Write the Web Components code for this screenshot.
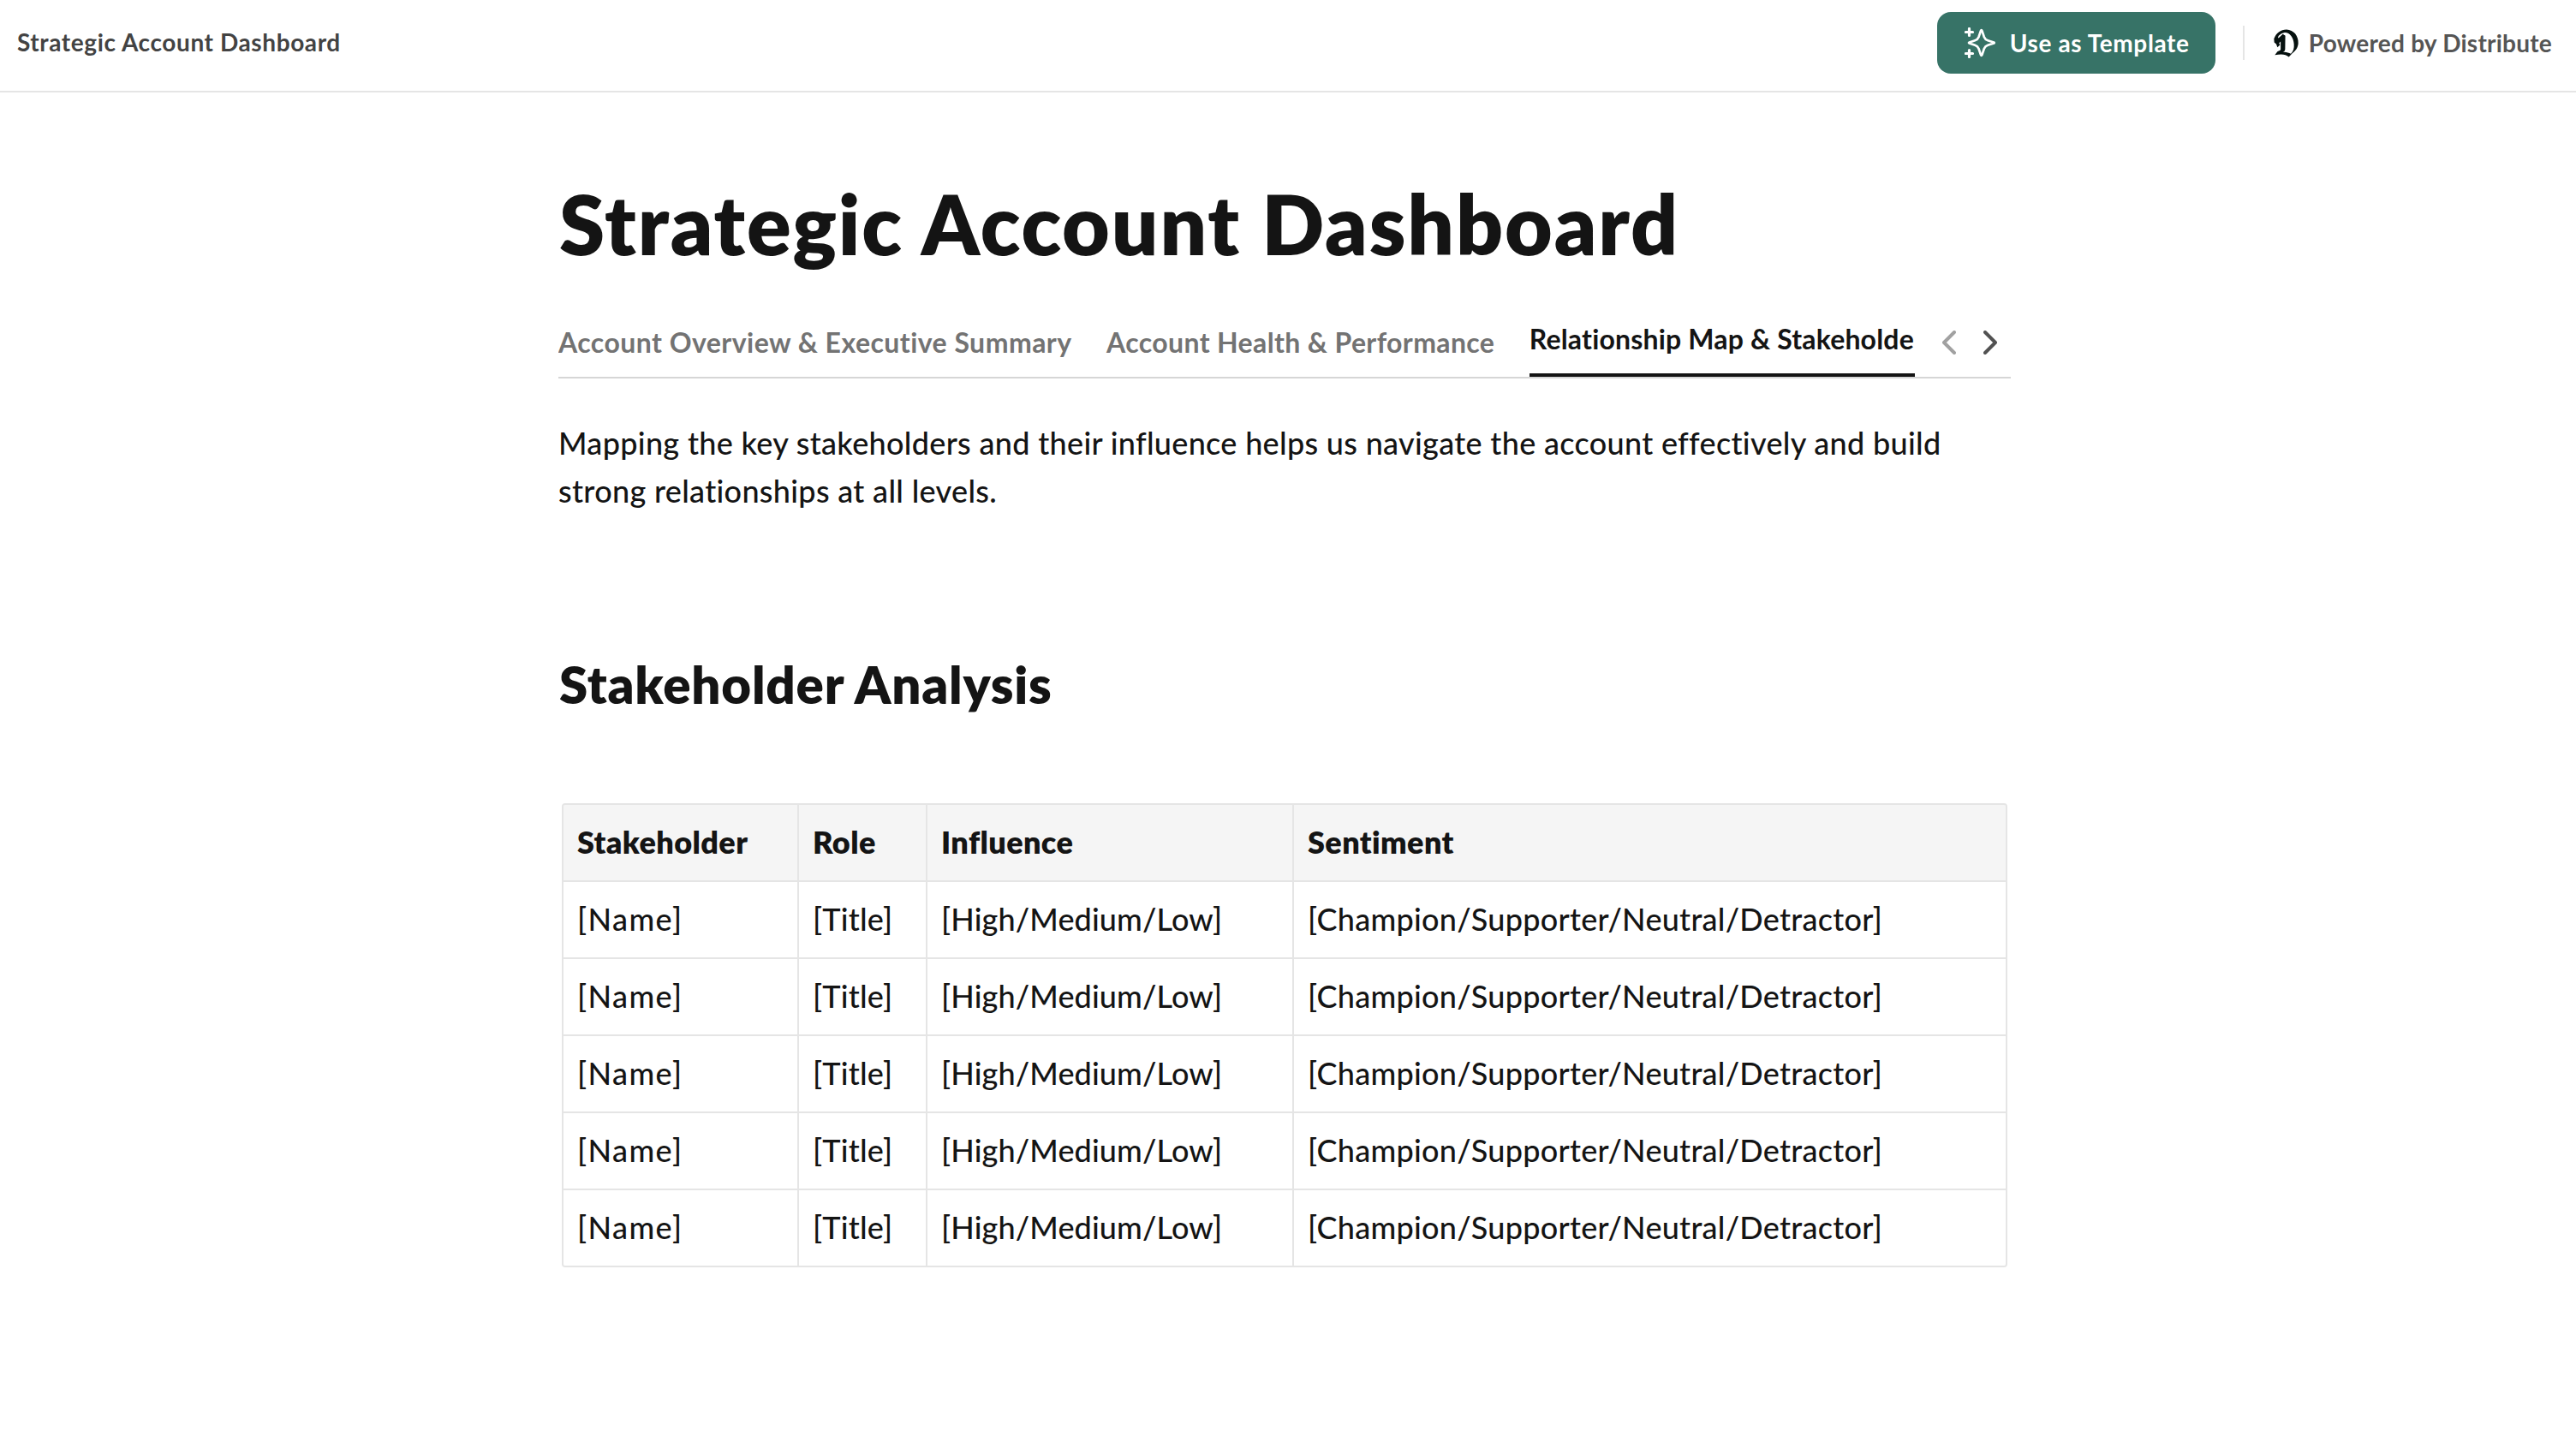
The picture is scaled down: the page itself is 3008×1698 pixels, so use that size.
<!DOCTYPE html>
<html lang="en">
<head>
<meta charset="utf-8">
<title>Strategic Account Dashboard</title>
<style>
  body {
    margin: 0;
    background: #fff;
    color: #141414;
    font-family: Lato, "Open Sans", sans-serif;
    --line: #e5e5e5;
    --primary: #377367;
  }
</style>
</head>
<body>
<top-bar>
  <span slot="title">Strategic Account Dashboard</span>
  <template-button>Use as Template</template-button>
  <powered-by>Powered by Distribute</powered-by>
</top-bar>

<doc-page>
  <doc-title>Strategic Account Dashboard</doc-title>
  <tab-bar>
    <tab-item style="letter-spacing: 0.46px">Account Overview &amp; Executive Summary</tab-item>
    <tab-item style="letter-spacing: 0.37px">Account Health &amp; Performance</tab-item>
    <tab-item active style="letter-spacing: 0.17px">Relationship Map &amp; Stakeholde</tab-item>
  </tab-bar>
  <doc-text>Mapping the key stakeholders and their influence helps us navigate the account effectively and build strong relationships at all levels.</doc-text>
  <doc-heading>Stakeholder Analysis</doc-heading>
  <doc-table>
    <doc-row header>
      <doc-cell>Stakeholder</doc-cell>
      <doc-cell>Role</doc-cell>
      <doc-cell>Influence</doc-cell>
      <doc-cell>Sentiment</doc-cell>
    </doc-row>
  </doc-table>
</doc-page>

<script>
class BaseElement extends HTMLElement {
  constructor() {
    super();
    const template = document.createElement('template');
    template.innerHTML = this.constructor.html;
    this.attachShadow({ mode: 'open' });
    this.shadowRoot.appendChild(template.content.cloneNode(true));
  }
}

class TopBar extends BaseElement {
  static html = `
    <style>
      :host {
        display: flex;
        align-items: center;
        justify-content: space-between;
        box-sizing: border-box;
        height: 108px;
        padding: 0 28px 8px 20px;
        border-bottom: 2px solid var(--line);
        font-size: 28px;
        font-weight: 700;
        line-height: 40px;
      }

      .title {
        color: #434343;
        letter-spacing: 0.6px;
      }

      .actions {
        display: flex;
        align-items: center;
        gap: 32px;
        padding-top: 2px;
      }
    </style>
    <div class="title"><slot name="title"></slot></div>
    <div class="actions"><slot></slot></div>
  `;
}

class TemplateButton extends BaseElement {
  static html = `
    <style>
      :host {
        display: flex;
        align-items: center;
        box-sizing: border-box;
        width: 325px;
        height: 72px;
        gap: 17px;
        padding-left: 32px;
        border-radius: 16px;
        background: var(--primary);
        color: #fff;
        letter-spacing: 0.6px;
      }

      svg {
        width: 36px;
        height: 36px;
      }
    </style>
    <svg viewBox="0 0 36 36" fill="none" stroke="currentColor" stroke-width="2.7" stroke-linecap="round" stroke-linejoin="round">
      <path d="M19.7 3 Q20.1 3 20.4 3.9 L22.9 11.2 Q24.1 14.3 27.2 15.3 L34.2 17.5 Q35.2 18 34.2 18.5 L27.2 20.7 Q24.1 21.7 22.9 24.8 L20.4 32.1 Q19.7 33.8 19 32.1 L16.5 24.8 Q15.3 21.7 12.2 20.7 L5.6 18.5 Q4.4 18 5.6 17.5 L12.2 15.3 Q15.3 14.3 16.5 11.2 L19 3.9 Q19.3 3 19.7 3 Z"/>
      <path stroke-width="3.2" d="M5.5 1.5 V9.5 M1.5 5.5 H9.5 M5.5 26.5 V34.5 M1.5 30.5 H9.5"/>
    </svg>
    <span><slot></slot></span>
  `;
}

class PoweredBy extends BaseElement {
  static html = `
    <style>
      :host {
        display: flex;
        align-items: center;
        color: #555;
        letter-spacing: 0.24px;
      }

      .divider {
        width: 2px;
        height: 40px;
        margin-right: 34px;
        background: var(--line);
      }

      svg {
        width: 29px;
        height: 33px;
        margin-right: 12px;
      }
    </style>
    <div class="divider"></div>
    <svg viewBox="0 0 87 98" fill="#06110f">
      <path fill-rule="evenodd" d="M1 33 C8 14 24 1 45 1 C70 2 87 23 86 49 C85 66 76 76 65 84 L53 97 C42 87 28 86 4 90 L13 78 C20 74 24 76 25 70 L25 42 L19 48 L22 55 L13 63 L9 52 L2 46 Z
        M17 32 L32 17 L40 23 L40 71 C39 77 35 79 31 81 C41 78 52 83 60 86 C69 77 72 67 71 53 C70 27 54 9 36 12 C25 14 19 20 15 27 Z"/>
      <path d="M13 35 L31 19 L40 22 L39 72 Q36 79 28 80 L22 76 Q26 73 25 66 L25 36 L17 42 Z"/>
    </svg>
    <span><slot></slot></span>
  `;
}

class DocPage extends BaseElement {
  static html = `
    <style>
      :host {
        display: flex;
        flex-direction: column;
        width: 1696px;
        margin-left: 652px;
        padding-top: 95px;
      }
    </style>
    <slot></slot>
  `;
}

class DocTitle extends BaseElement {
  static html = `
    <style>
      :host {
        display: block;
        padding-left: 1px;
        font-size: 96px;
        font-weight: 800;
        line-height: 116px;
        letter-spacing: 1.9px;
      }
      h1 { margin: 0; font: inherit; }
    </style>
    <h1><slot></slot></h1>
  `;
}

class TabBar extends BaseElement {
  static html = `
    <style>
      :host {
        display: flex;
        align-items: center;
        box-sizing: border-box;
        height: 84px;
        margin-top: 39px;
        border-bottom: 2px solid #d6d6d6;
      }

      .tabs {
        display: flex;
        gap: 40.5px;
        width: 1584px;
        overflow: hidden;
      }

      .arrows {
        display: flex;
        gap: 32px;
        margin-left: 32px;
        padding-top: 2px;
      }

      svg {
        width: 16px;
        height: 28px;
      }
    </style>
    <div class="tabs"><slot></slot></div>
    <div class="arrows">
      <svg viewBox="0 0 16 28" fill="none" stroke="#a1a1a1" stroke-width="4" stroke-linecap="round" stroke-linejoin="round"><path d="M14 2 L2 14 L14 26"/></svg>
      <svg viewBox="0 0 16 28" fill="none" stroke="#525252" stroke-width="4" stroke-linecap="round" stroke-linejoin="round"><path d="M2 2 L14 14 L2 26"/></svg>
    </div>
  `;
}

class TabItem extends BaseElement {
  static html = `
    <style>
      :host {
        display: flex;
        align-items: center;
        flex: none;
        box-sizing: border-box;
        height: 82px;
        color: #737373;
        font-size: 32px;
        font-weight: 700;
        white-space: nowrap;
      }

      :host([active]) {
        width: 451px;
        padding-bottom: 4px;
        border-bottom: 4px solid #141414;
        color: #141414;
      }
    </style>
    <slot></slot>
  `;
}

class DocText extends BaseElement {
  static html = `
    <style>
      :host {
        display: block;
        margin-top: 47px;
        font-size: 36px;
        font-weight: 500;
        line-height: 56px;
        letter-spacing: 0.32px;
      }
    </style>
    <slot></slot>
  `;
}

class DocHeading extends BaseElement {
  static html = `
    <style>
      :host {
        display: block;
        margin-top: 162px;
        padding-left: 1px;
        font-size: 60px;
        font-weight: 800;
        line-height: 72px;
        letter-spacing: 0.78px;
      }
      h2 { margin: 0; font: inherit; }
    </style>
    <h2><slot></slot></h2>
  `;
}

class DocTable extends BaseElement {
  static html = `
    <style>
      :host {
        display: block;
        margin: 103px 4px 0;
        border: 2px solid var(--line);
        border-radius: 4px;
        overflow: hidden;
      }
    </style>
    <slot></slot>
  `;
}

class DocRow extends BaseElement {
  static html = `
    <style>
      :host {
        display: grid;
        grid-template-columns: 273px 148px 426px 1fr;
        gap: 2px;
        height: 88px;
        background: var(--line);
        font-size: 36px;
        font-weight: 500;
        --cell: #fff;
      }

      :host(:not(:first-child)) {
        padding-top: 2px;
      }

      :host([header]) {
        font-weight: 800;
        letter-spacing: 0.4px;
        --cell: #f5f5f5;
      }
    </style>
    <slot></slot>
  `;
}

class DocCell extends BaseElement {
  static html = `
    <style>
      :host {
        display: block;
        padding: 15px 16px 17px;
        background: var(--cell);
        line-height: 56px;
        white-space: nowrap;
      }
    </style>
    <slot></slot>
  `;
}

// letter-spacing per column, body rows
const columns = [
  { text: '[Name]', spacing: 1.44 },
  { text: '[Title]', spacing: 0.22 },
  { text: '[High/Medium/Low]', spacing: 0.13 },
  { text: '[Champion/Supporter/Neutral/Detractor]', spacing: 0.27 },
];

const table = document.querySelector('doc-table');
for (let i = 0; i < 5; i++) {
  const row = document.createElement('doc-row');
  for (const column of columns) {
    const cell = document.createElement('doc-cell');
    cell.textContent = column.text;
    cell.style.letterSpacing = column.spacing + 'px';
    row.appendChild(cell);
  }
  table.appendChild(row);
}

customElements.define('top-bar', TopBar);
customElements.define('template-button', TemplateButton);
customElements.define('powered-by', PoweredBy);
customElements.define('doc-page', DocPage);
customElements.define('doc-title', DocTitle);
customElements.define('tab-bar', TabBar);
customElements.define('tab-item', TabItem);
customElements.define('doc-text', DocText);
customElements.define('doc-heading', DocHeading);
customElements.define('doc-table', DocTable);
customElements.define('doc-row', DocRow);
customElements.define('doc-cell', DocCell);
</script>
</body>
</html>
